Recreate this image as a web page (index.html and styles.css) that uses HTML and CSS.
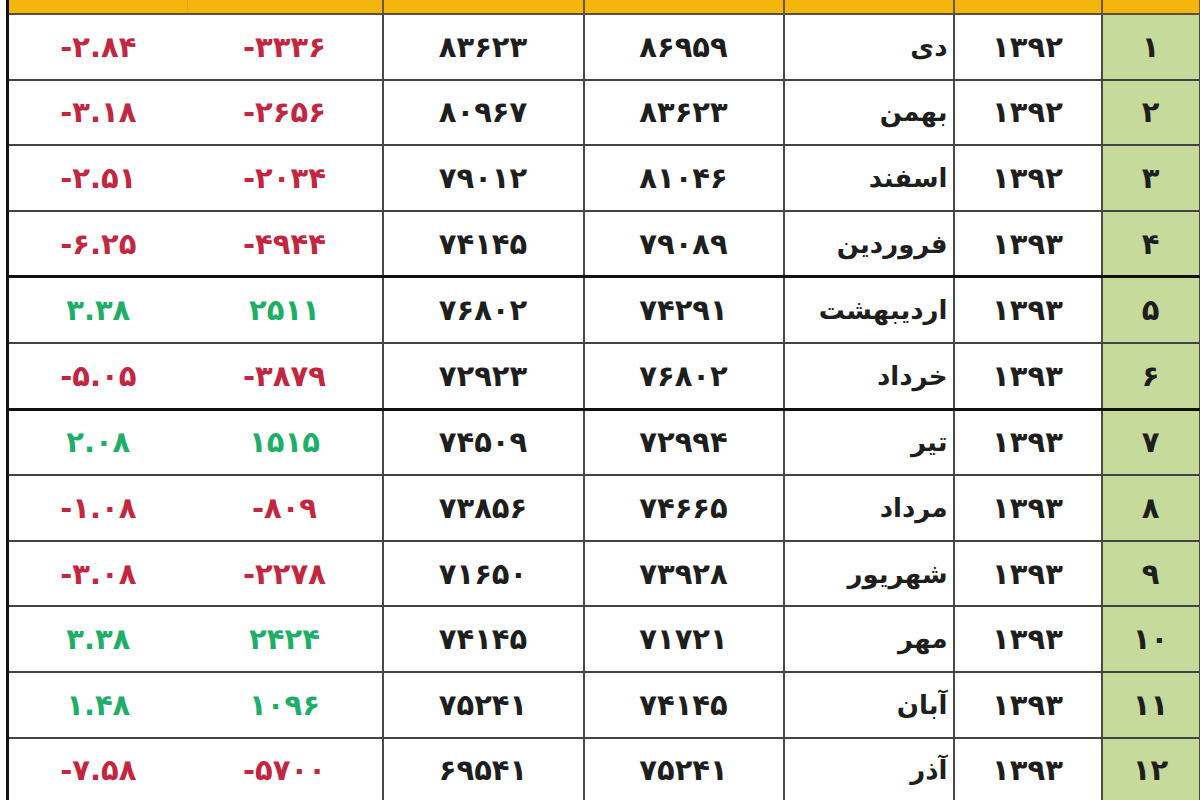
FILE: index.html
```html
<!DOCTYPE html>
<html lang="fa">
<head>
<meta charset="utf-8">
<title>جدول</title>
<link rel="stylesheet" href="styles.css">
</head>
<body>
<table class="sheet">
  <colgroup>
    <col class="c-pct"><col class="c-diff"><col class="c-next"><col class="c-cur"><col class="c-month"><col class="c-year"><col class="c-idx">
  </colgroup>
  <thead>
    <tr class="head"><th class="nosep"></th><th></th><th></th><th></th><th></th><th></th><th></th></tr>
  </thead>
  <tbody>
    <tr><td class="neg nosep">-۲.۸۴</td><td class="neg">-۳۳۳۶</td><td>۸۳۶۲۳</td><td>۸۶۹۵۹</td><td class="month">دی</td><td>۱۳۹۲</td><td class="idx">۱</td></tr>
    <tr><td class="neg nosep">-۳.۱۸</td><td class="neg">-۲۶۵۶</td><td>۸۰۹۶۷</td><td>۸۳۶۲۳</td><td class="month">بهمن</td><td>۱۳۹۲</td><td class="idx">۲</td></tr>
    <tr><td class="neg nosep">-۲.۵۱</td><td class="neg">-۲۰۳۴</td><td>۷۹۰۱۲</td><td>۸۱۰۴۶</td><td class="month">اسفند</td><td>۱۳۹۲</td><td class="idx">۳</td></tr>
    <tr class="thick"><td class="neg nosep">-۶.۲۵</td><td class="neg">-۴۹۴۴</td><td>۷۴۱۴۵</td><td>۷۹۰۸۹</td><td class="month">فروردین</td><td>۱۳۹۳</td><td class="idx">۴</td></tr>
    <tr><td class="pos nosep">۳.۳۸</td><td class="pos">۲۵۱۱</td><td>۷۶۸۰۲</td><td>۷۴۲۹۱</td><td class="month">اردیبهشت</td><td>۱۳۹۳</td><td class="idx">۵</td></tr>
    <tr class="thick"><td class="neg nosep">-۵.۰۵</td><td class="neg">-۳۸۷۹</td><td>۷۲۹۲۳</td><td>۷۶۸۰۲</td><td class="month">خرداد</td><td>۱۳۹۳</td><td class="idx">۶</td></tr>
    <tr><td class="pos nosep">۲.۰۸</td><td class="pos">۱۵۱۵</td><td>۷۴۵۰۹</td><td>۷۲۹۹۴</td><td class="month">تیر</td><td>۱۳۹۳</td><td class="idx">۷</td></tr>
    <tr><td class="neg nosep">-۱.۰۸</td><td class="neg">-۸۰۹</td><td>۷۳۸۵۶</td><td>۷۴۶۶۵</td><td class="month">مرداد</td><td>۱۳۹۳</td><td class="idx">۸</td></tr>
    <tr><td class="neg nosep">-۳.۰۸</td><td class="neg">-۲۲۷۸</td><td>۷۱۶۵۰</td><td>۷۳۹۲۸</td><td class="month">شهریور</td><td>۱۳۹۳</td><td class="idx">۹</td></tr>
    <tr><td class="pos nosep">۳.۳۸</td><td class="pos">۲۴۲۴</td><td>۷۴۱۴۵</td><td>۷۱۷۲۱</td><td class="month">مهر</td><td>۱۳۹۳</td><td class="idx">۱۰</td></tr>
    <tr><td class="pos nosep">۱.۴۸</td><td class="pos">۱۰۹۶</td><td>۷۵۲۴۱</td><td>۷۴۱۴۵</td><td class="month">آبان</td><td>۱۳۹۳</td><td class="idx">۱۱</td></tr>
    <tr><td class="neg nosep">-۷.۵۸</td><td class="neg">-۵۷۰۰</td><td>۶۹۵۴۱</td><td>۷۵۲۴۱</td><td class="month">آذر</td><td>۱۳۹۳</td><td class="idx">۱۲</td></tr>
  </tbody>
</table>
</body>
</html>
```

FILE: styles.css
```css
html, body {
  margin: 0;
  padding: 0;
  background: #ffffff;
  overflow: hidden;
}

.sheet {
  margin-left: 6px;
  width: 1192px;
  border-collapse: collapse;
  table-layout: fixed;
  font-family: "DejaVu Sans", sans-serif;
  font-weight: bold;
  color: #1e1e1e;
  border-left: 3px solid #111;
}

.c-pct { width: 180px; }
.c-diff { width: 195px; }
.c-next { width: 201px; }
.c-cur { width: 200px; }
.c-month { width: 170px; }
.c-year { width: 148px; }
.c-idx { width: 98px; }

.head th {
  height: 13px;
  padding: 0;
  background: #f4b50c;
  border-right: 2px solid #6a5a2a;
  border-bottom: 2px solid #5a5040;
}

.head th.nosep {
  border-right: 1px solid #e6aa10;
}

tbody td {
  height: 63.6px;
  padding: 0;
  text-align: center;
  vertical-align: middle;
  font-size: 29px;
  direction: ltr;
  border-right: 2px solid #4a4a4a;
  border-bottom: 2px solid #444;
  letter-spacing: 2px;
}

tbody td.nosep {
  border-right: none;
}

tbody tr.thick td {
  border-bottom: 3px solid #111;
}

td.neg { color: #c22640; }
td.pos { color: #1fae6a; }

td.month {
  direction: rtl;
  text-align: right;
  padding-right: 5px;
  font-size: 26px;
  letter-spacing: 0;
  font-weight: bold;
}

td.idx {
  background: #c6db9b;
}
```
